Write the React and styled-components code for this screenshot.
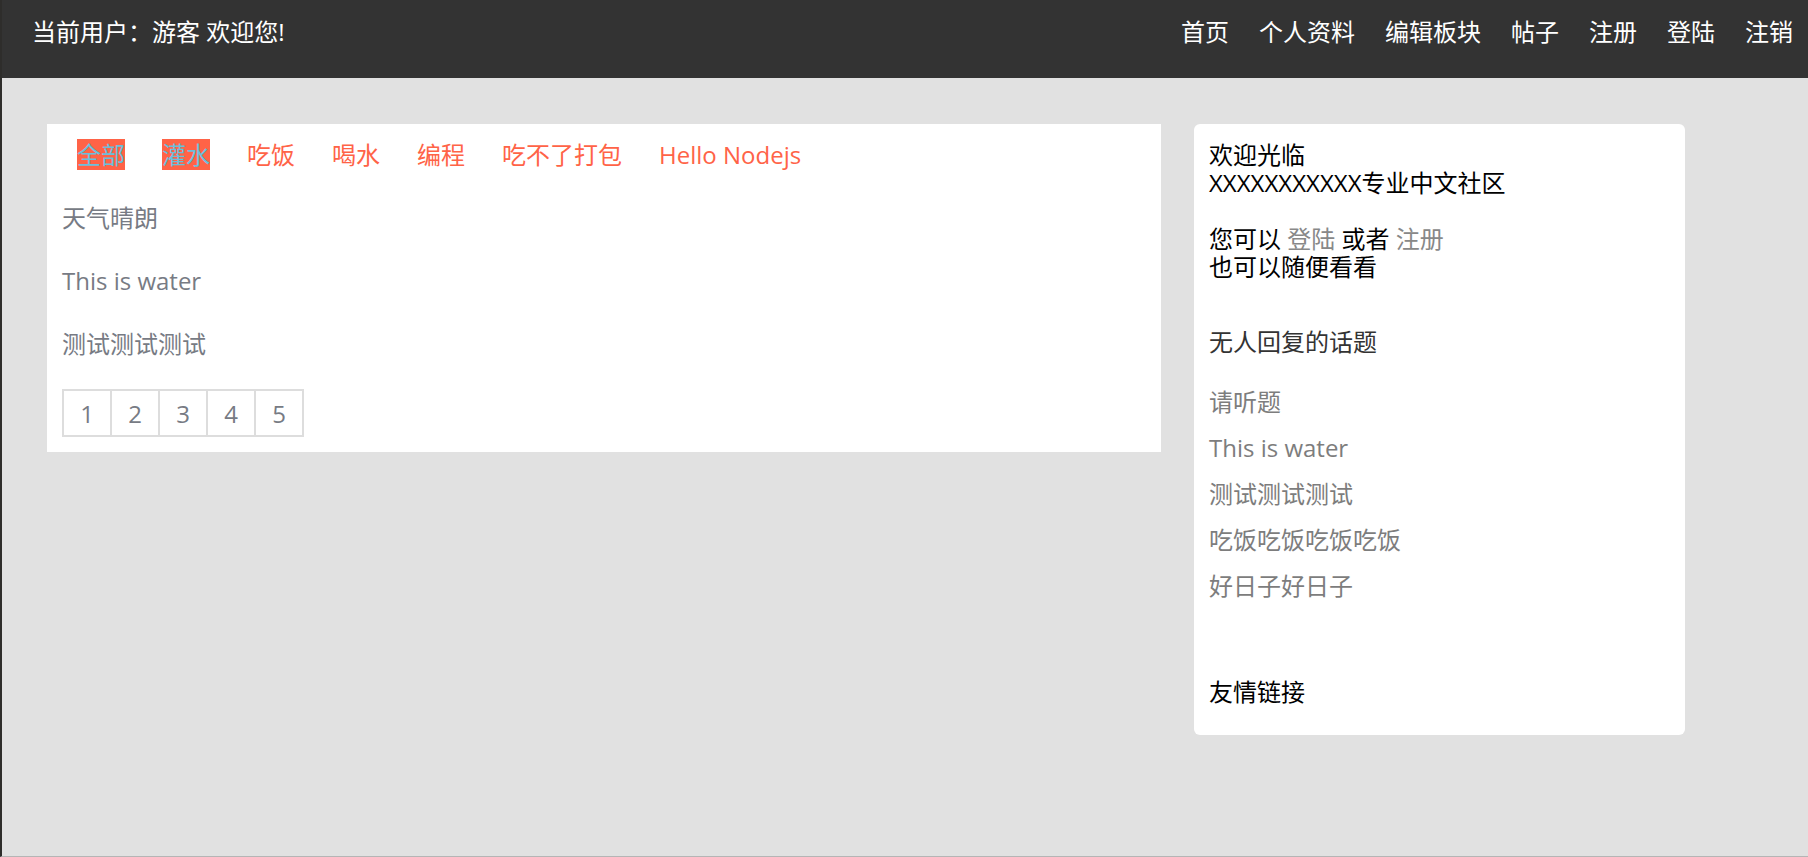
import React from "react";
import styled, { createGlobalStyle } from "styled-components";

const GlobalStyle = createGlobalStyle`
  html, body {
    margin: 0;
    padding: 0;
  }
  body {
    background: #e1e1e1;
    font-family: "Open Sans", "Noto Sans CJK SC", sans-serif;
  }
  * {
    box-sizing: border-box;
  }
`;

const Page = styled.div`
  min-height: 857px;
  height: 857px;
  background: #e1e1e1;
  border-left: 2px solid #2e2d2b;
  border-bottom: 1px solid #b5b5b5;
`;

const Header = styled.header`
  height: 78px;
  background: #333333;
  color: #ffffff;
  display: flex;
  justify-content: space-between;
  align-items: flex-start;
  padding: 16px 15px 0 30px;
  font-size: 24px;
  line-height: 31px;
`;

const UserInfo = styled.div`
  white-space: pre;
`;

const Nav = styled.nav`
  display: flex;
  gap: 30px;
`;

const NavLink = styled.a`
  color: #ffffff;
  text-decoration: none;
  cursor: pointer;
`;

const Body = styled.div`
  display: flex;
  align-items: flex-start;
  gap: 33px;
  padding: 46px 0 0 45px;
`;

const Main = styled.section`
  width: 1114px;
  background: #ffffff;
  padding: 15px;
`;

const Tabs = styled.ul`
  display: flex;
  gap: 37px;
  list-style: none;
  margin: 0;
  padding: 0 0 0 15px;
  font-size: 24px;
  line-height: 31px;
`;

const Tab = styled.li`
  color: ${(p) => (p.$active ? "#6bbfdc" : "#ff6347")};
  background: ${(p) => (p.$active ? "#ff6347" : "transparent")};
  cursor: pointer;
`;

const Topic = styled.div`
  margin-top: 32px;
  font-size: 24px;
  line-height: 31px;
  color: #777b84;
`;

const Pager = styled.div`
  display: flex;
  margin-top: 30px;
`;

const PageBox = styled.span`
  width: 50px;
  height: 48px;
  border: 2px solid #dddddd;
  margin-left: -2px;
  display: flex;
  align-items: center;
  justify-content: center;
  font-size: 24px;
  color: #777b84;
  background: #ffffff;

  &:first-child {
    margin-left: 0;
  }
`;

const Side = styled.aside`
  width: 491px;
  background: #ffffff;
  border-radius: 6px;
  padding: 17px 15px 29px;
  font-size: 24px;
  line-height: 28px;
  color: #000000;
`;

const Welcome = styled.p`
  margin: 0;
`;

const GrayLink = styled.a`
  color: #888888;
  text-decoration: none;
  cursor: pointer;
`;

const SideTitle = styled.h4`
  margin: ${(p) => p.$top}px 0 0;
  font-size: 24px;
  font-weight: normal;
  line-height: 28px;
  color: ${(p) => p.$color};
`;

const SideList = styled.ul`
  list-style: none;
  margin: 0;
  padding: 0;
`;

const SideItem = styled.li`
  margin-top: ${(p) => (p.$first ? 32 : 18)}px;
  color: #7d7d7d;
  line-height: 28px;
`;

const tabs = ["全部", "灌水", "吃饭", "喝水", "编程", "吃不了打包", "Hello Nodejs"];
const topics = ["天气晴朗", "This is water", "测试测试测试"];
const noReply = ["请听题", "This is water", "测试测试测试", "吃饭吃饭吃饭吃饭", "好日子好日子"];
const navs = ["首页", "个人资料", "编辑板块", "帖子", "注册", "登陆", "注销"];

const App = () => {
  return (
    <>
      <GlobalStyle />
      <Page>
        <Header>
          <UserInfo>当前用户：游客 欢迎您!</UserInfo>
          <Nav>
            {navs.map((n) => (
              <NavLink key={n}>{n}</NavLink>
            ))}
          </Nav>
        </Header>
        <Body>
          <Main>
            <Tabs>
              {tabs.map((t, i) => (
                <Tab key={t} $active={i < 2}>
                  {t}
                </Tab>
              ))}
            </Tabs>
            {topics.map((t) => (
              <Topic key={t}>{t}</Topic>
            ))}
            <Pager>
              {[1, 2, 3, 4, 5].map((n) => (
                <PageBox key={n}>{n}</PageBox>
              ))}
            </Pager>
          </Main>
          <Side>
            <Welcome>
              欢迎光临
              <br />
              XXXXXXXXXXX专业中文社区
              <br />
              <br />
              您可以 <GrayLink>登陆</GrayLink> 或者 <GrayLink>注册</GrayLink>
              <br />
              也可以随便看看
            </Welcome>
            <SideTitle $top={47} $color="#333333">
              无人回复的话题
            </SideTitle>
            <SideList>
              {noReply.map((t, i) => (
                <SideItem key={t} $first={i === 0}>
                  {t}
                </SideItem>
              ))}
            </SideList>
            <SideTitle $top={78} $color="#000000">
              友情链接
            </SideTitle>
          </Side>
        </Body>
      </Page>
    </>
  );
};

export default App;
